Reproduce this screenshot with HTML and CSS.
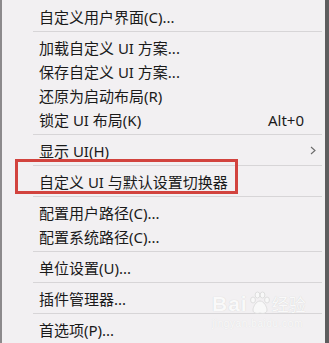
FILE: index.html
```html
<!DOCTYPE html>
<html>
<head>
<meta charset="utf-8">
<link rel="stylesheet" href="styles.css">
</head>
<body>
<div class="menu">
  <div class="item">自定义用户界面(C)...</div>
  <div class="sep"></div>
  <div class="item">加载自定义 UI 方案...</div>
  <div class="item">保存自定义 UI 方案...</div>
  <div class="item">还原为启动布局(R)</div>
  <div class="item"><span>锁定 UI 布局(K)</span><span class="key">Alt+0</span></div>
  <div class="sep"></div>
  <div class="item"><span>显示 UI(H)</span><svg class="arrow" width="6" height="9" viewBox="0 0 6 9"><polyline points="1,1 5,4.5 1,8" fill="none" stroke="#6a6a6a" stroke-width="1.1"/></svg></div>
  <div class="sep"></div>
  <div class="item">自定义 UI 与默认设置切换器</div>
  <div class="sep"></div>
  <div class="item">配置用户路径(C)...</div>
  <div class="item">配置系统路径(C)...</div>
  <div class="sep"></div>
  <div class="item">单位设置(U)...</div>
  <div class="sep"></div>
  <div class="item">插件管理器...</div>
  <div class="sep"></div>
  <div class="item">首选项(P)...</div>
  <div class="sep"></div>

  <div class="highlight"></div>

  <div class="watermark">
    <div class="wm-top">
      <span class="wm-bai">Bai</span>
      <svg class="wm-paw" width="22" height="24" viewBox="0 0 22 24">
        <g fill="#f8f8f8" stroke="#d8d8d8" stroke-width="0.8">
          <ellipse cx="4" cy="9" rx="2.4" ry="3"/>
          <ellipse cx="8.5" cy="4" rx="2.4" ry="3"/>
          <ellipse cx="13.5" cy="4" rx="2.4" ry="3"/>
          <ellipse cx="18" cy="9" rx="2.4" ry="3"/>
          <path d="M11 10 C7 10 4 16 4 19 C4 22 7 23 11 22 C15 23 18 22 18 19 C18 16 15 10 11 10 Z"/>
        </g>
      </svg>
      <span class="wm-jy">经验</span>
    </div>
    <div class="wm-url">jingyan.baidu.com</div>
  </div>
</div>
</body>
</html>
```

FILE: styles.css
```css
html, body {
  margin: 0;
  padding: 0;
  background: #f2f0f2;
}

.menu {
  position: relative;
  width: 329px;
  height: 343px;
  box-sizing: border-box;
  padding-top: 4px;
  background: #f2f0f2;
  border-left: 2px solid #8c8a8c;
  border-right: 4px solid #5e5d5e;
  overflow: hidden;
  font-family: "Noto Sans", "Noto Sans CJK SC", sans-serif;
  font-size: 15px;
  color: #1a1a1a;
}

.item {
  display: flex;
  justify-content: space-between;
  align-items: center;
  height: 24px;
  line-height: 24px;
  padding-left: 37px;
  padding-right: 21px;
  padding-top: 1px;
  box-sizing: border-box;
  white-space: nowrap;
}

.key {
  color: #1a1a1a;
}

.arrow {
  margin-right: -12px;
}

.sep {
  height: 1px;
  margin: 3px 3px 3px 31px;
  background: #d7d5d7;
}

.highlight {
  position: absolute;
  left: 13px;
  top: 159px;
  width: 223px;
  height: 35px;
  box-sizing: border-box;
  border: 3px solid #d2433e;
}

.watermark {
  position: absolute;
  left: 210px;
  top: 291px;
  display: flex;
  flex-direction: column;
  align-items: flex-start;
  font-family: "Liberation Sans", Arial, sans-serif;
  color: #fafafa;
}

.wm-top {
  display: flex;
  align-items: flex-end;
  gap: 1px;
}

.wm-bai {
  font-size: 21px;
  font-weight: bold;
  line-height: 22px;
  letter-spacing: 1px;
  color: #f9f9f9;
  text-shadow: 0 0 1px #cdcdcd;
}

.wm-paw {
  display: block;
}

.wm-jy {
  font-family: "Noto Sans CJK SC", sans-serif;
  font-size: 17px;
  line-height: 22px;
  color: #f9f9f9;
  text-shadow: 0 0 1px #cdcdcd;
}

.wm-url {
  margin-top: 3px;
  font-size: 10px;
  line-height: 11px;
  letter-spacing: 0.6px;
  color: #f9f9f9;
  text-shadow: 0 0 1px #dadada;
}
```
